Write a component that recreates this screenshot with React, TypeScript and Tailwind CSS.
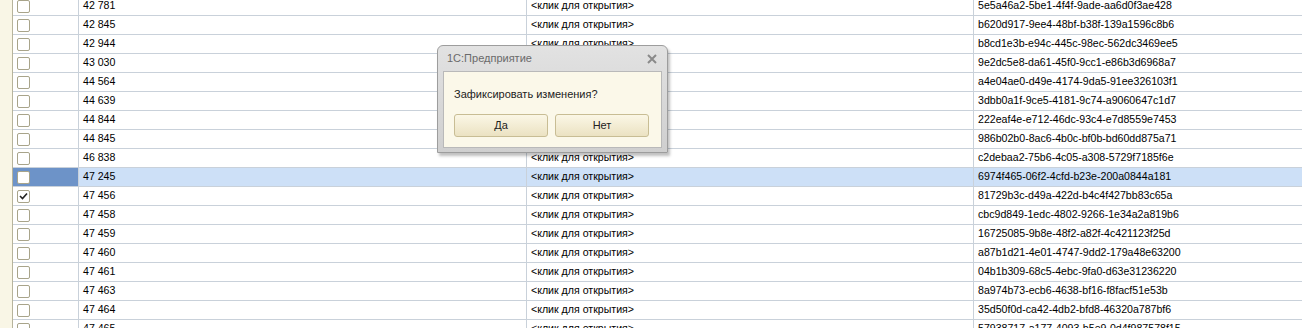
import { FC } from "react";

type Row = { num: string; uuid: string; checked?: boolean; selected?: boolean };

const rows: Row[] = [
  { num: "42 781", uuid: "5e5a46a2-5be1-4f4f-9ade-aa6d0f3ae428" },
  { num: "42 845", uuid: "b620d917-9ee4-48bf-b38f-139a1596c8b6" },
  { num: "42 944", uuid: "b8cd1e3b-e94c-445c-98ec-562dc3469ee5" },
  { num: "43 030", uuid: "9e2dc5e8-da61-45f0-9cc1-e86b3d6968a7" },
  { num: "44 564", uuid: "a4e04ae0-d49e-4174-9da5-91ee326103f1" },
  { num: "44 639", uuid: "3dbb0a1f-9ce5-4181-9c74-a9060647c1d7" },
  { num: "44 844", uuid: "222eaf4e-e712-46dc-93c4-e7d8559e7453" },
  { num: "44 845", uuid: "986b02b0-8ac6-4b0c-bf0b-bd60dd875a71" },
  { num: "46 838", uuid: "c2debaa2-75b6-4c05-a308-5729f7185f6e" },
  { num: "47 245", uuid: "6974f465-06f2-4cfd-b23e-200a0844a181", selected: true },
  { num: "47 456", uuid: "81729b3c-d49a-422d-b4c4f427bb83c65a", checked: true },
  { num: "47 458", uuid: "cbc9d849-1edc-4802-9266-1e34a2a819b6" },
  { num: "47 459", uuid: "16725085-9b8e-48f2-a82f-4c421123f25d" },
  { num: "47 460", uuid: "a87b1d21-4e01-4747-9dd2-179a48e63200" },
  { num: "47 461", uuid: "04b1b309-68c5-4ebc-9fa0-d63e31236220" },
  { num: "47 463", uuid: "8a974b73-ecb6-4638-bf16-f8facf51e53b" },
  { num: "47 464", uuid: "35d50f0d-ca42-4db2-bfd8-46320a787bf6" },
  { num: "47 465", uuid: "57938717-a177-4093-b5e9-0d4f987578f15" },
];

const CheckBox: FC<{ checked?: boolean }> = ({ checked }) => (
  <div className="w-[13px] h-[13px] rounded-[2px] border border-[#a8a48a] bg-white flex items-center justify-center">
    {checked && (
      <svg width="9" height="8" viewBox="0 0 9 8">
        <path d="M1 4 L3.5 6.5 L8 1.5" fill="none" stroke="#222" strokeWidth="1.6" />
      </svg>
    )}
  </div>
);

const GridRow: FC<{ row: Row }> = ({ row }) => (
  <div
    className={`flex h-[19px] border-b border-[#c9d1da] ${
      row.selected ? "bg-[#cde0f7]" : "bg-white"
    }`}
  >
    <div
      className={`w-[66px] shrink-0 border-r border-[#c9d1da] pl-[4px] flex items-center ${
        row.selected ? "bg-[#6d93c8]" : ""
      }`}
    >
      <CheckBox checked={row.checked} />
    </div>
    <div className="w-[448px] shrink-0 border-r border-[#c9d1da] pl-[4px] flex items-center">
      {row.num}
    </div>
    <div className="w-[447px] shrink-0 border-r border-[#c9d1da] pl-[4px] flex items-center">
      &lt;клик для открытия&gt;
    </div>
    <div className="flex-1 pl-[4px] flex items-center whitespace-nowrap">{row.uuid}</div>
  </div>
);

const Dialog: FC = () => (
  <div className="absolute left-[437px] top-[45px] w-[231px] h-[108px] rounded-t-[6px] border border-[#9d9d9d] bg-gradient-to-b from-[#e2e2e2] to-[#cfcfcf] shadow-[2px_3px_3px_rgba(0,0,0,0.25)] flex flex-col">
    <div className="h-[25px] flex items-center justify-between pl-[9px] pr-[10px]">
      <span className="text-[#6a6a6a] text-[11px]">1С:Предприятие</span>
      <svg width="10" height="10" viewBox="0 0 10 10">
        <path d="M1 1 L9 9 M9 1 L1 9" stroke="#8a8a8a" strokeWidth="2" />
      </svg>
    </div>
    <div className="mx-[5px] mb-[4px] flex-1 bg-[#fbf8e9] border border-[#b9b9b9] flex flex-col px-[10px]">
      <div className="mt-[14px] text-[11px] text-[#222]">Зафиксировать изменения?</div>
      <div className="mt-[11px] flex gap-[7px]">
        <button className="w-[94px] h-[23px] rounded-[3px] border border-[#c8bd94] bg-gradient-to-b from-[#fbf7e6] to-[#ebe2c2] text-[11px] text-[#222]">
          Да
        </button>
        <button className="w-[94px] h-[23px] rounded-[3px] border border-[#c8bd94] bg-gradient-to-b from-[#fbf7e6] to-[#ebe2c2] text-[11px] text-[#222]">
          Нет
        </button>
      </div>
    </div>
  </div>
);

export default function App() {
  return (
    <div
      className="relative w-[1302px] h-[328px] overflow-hidden bg-white flex text-[10.6px] text-black"
      style={{ fontFamily: '"Liberation Sans", Arial, sans-serif' }}
    >
      <div className="w-[13px] shrink-0 bg-[#f9f6e6] border-r border-[#b7b49c]" />
      <div className="flex-1 -mt-[3px]">
        {rows.map((r) => (
          <GridRow key={r.num} row={r} />
        ))}
      </div>
      <Dialog />
    </div>
  );
}
